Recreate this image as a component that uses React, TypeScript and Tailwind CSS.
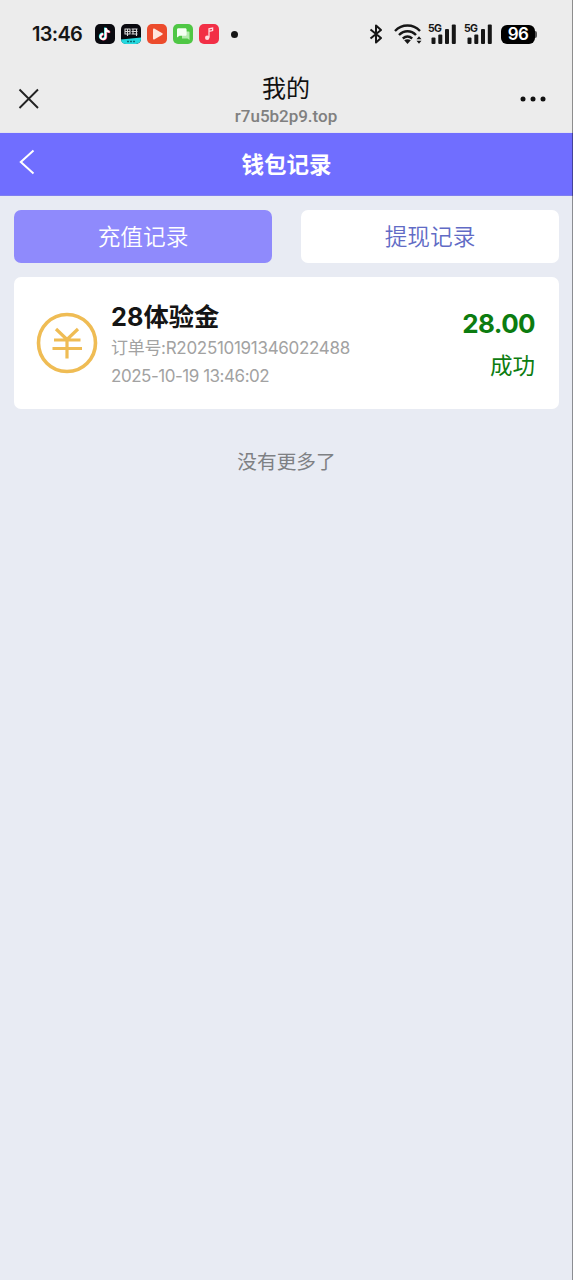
import type { ReactNode } from "react";

const tabs = [
  { name: "充值记录", active: true },
  { name: "提现记录", active: false },
];

const records = [
  {
    title: "28体验金",
    orderNo: "R202510191346022488",
    time: "2025-10-19 13:46:02",
    amount: "28.00",
    status: "成功",
  },
];

function AppBadge({ children }: { children: ReactNode }) {
  return (
    <svg width="20" height="20" viewBox="0 0 20 20" fill="none">
      {children}
    </svg>
  );
}

function Signal() {
  return (
    <div className="relative h-5 w-7">
      <svg className="block" width="28" height="20" viewBox="0 0 28 20" fill="#161616">
        <rect x="3.5" y="13.5" width="4" height="6.5" rx="1" />
        <rect x="10.3" y="10.5" width="4" height="9.5" rx="1" />
        <rect x="17" y="5" width="4" height="15" rx="1" />
        <rect x="23.800" y="0.5" width="4" height="19.5" rx="1" />
      </svg>
      <span className="absolute top-0 left-0 text-[10.500px] leading-[10px] font-bold tracking-[-0.6px]">
        5G
      </span>
    </div>
  );
}

function StatusBar() {
  return (
    <div className="flex h-[68px] items-center pl-8 pr-[36px] text-[#161616]">
      <span className="w-[63px] text-[20px] font-semibold tracking-[-0.7px]">13:46</span>

      <div className="flex items-center gap-[6px]">
        <AppBadge>
          <rect width="20" height="20" rx="5" fill="#09090f" />
          <path d="M10.6 4v8.6a2.6 2.6 0 1 1-2.4-2.6M10.6 4c.3 2.2 1.8 3.6 4 3.8" stroke="#2be8e6" strokeWidth="2" transform="translate(-.6 -.4)" />
          <path d="M10.6 4v8.6a2.6 2.6 0 1 1-2.4-2.6M10.6 4c.3 2.2 1.8 3.6 4 3.8" stroke="#f9406c" strokeWidth="2" transform="translate(.6 .4)" />
          <path d="M10.6 4v8.6a2.6 2.6 0 1 1-2.4-2.6M10.6 4c.3 2.2 1.8 3.6 4 3.8" stroke="#fff" strokeWidth="2" />
        </AppBadge>
        <AppBadge>
          <rect width="20" height="20" rx="5" fill="#09090f" />
          <path d="M0 15.500 20 13.500v1.500a5 5 0 0 1-5 5H5a5 5 0 0 1-5-4.500z" fill="#24d8de" />
          <path d="M3.500 5h6M3.500 7.500h6M3.500 10h6M4 5v5M6.500 4.500V12M9 5v5M10.500 5h6M10.500 7.500h6M10.500 10h6M12 4.500v6M15.500 4.500V12" stroke="#d8d8d8" strokeWidth="1.100" />
          <path d="M6 17.500h2M9 17.500h2M12 17.500h2" stroke="#0a6d77" strokeWidth="1.500" />
        </AppBadge>
        <AppBadge>
          <rect width="20" height="20" rx="5" fill="#ec4b2c" />
          <path d="M6 5.200v9.600c0 .7.6 1 1.200.7l8.100-4.800c.6-.4.6-1 0-1.400L7.200 4.500c-.6-.3-1.200 0-1.200.7z" fill="#ffe4dc" />
        </AppBadge>
        <AppBadge>
          <rect width="20" height="20" rx="5" fill="#4fc745" />
          <path d="M9 7.500h6.500c.8 0 1 .4 1 1V16l-2-1.500H9z" fill="#b5ebae" />
          <path d="M5.500 4.300h6.600c1 0 1.500.5 1.500 1.500v4.400c0 1-.5 1.500-1.500 1.500H6.500L4 13.500V5.800c0-1 .5-1.500 1.500-1.500z" fill="#f4fff2" />
        </AppBadge>
        <AppBadge>
          <rect width="20" height="20" rx="5" fill="#f22f46" />
          <path d="M10 13.500V4.800l3.600-.8v2.600L10 7.400" stroke="#ffdce0" strokeWidth="1.300" />
          <circle cx="8.200" cy="13.700" r="2.200" fill="#ffdce0" />
        </AppBadge>
      </div>

      <span className="ml-3 size-[7px] rounded-full bg-[#161616]" />

      <div className="ml-auto flex items-center">
        <svg width="14" height="20" viewBox="0 0 14 20" fill="none" stroke="#161616" strokeWidth="2">
          <path d="M1.500 5.500 12 14l-5 4.500v-17L12 6 1.500 14.500" strokeLinejoin="round" />
        </svg>
        <svg className="ml-[11px]" width="28" height="20" viewBox="0 0 28 20" fill="none">
          <g stroke="#161616" strokeWidth="2.400">
            <path d="M1 7C8 -.3 19-.3 26 7" />
            <path d="M5 11c5-5 12-5 17 0" />
            <path d="M8.800 14.500c3-2.600 6.400-2.600 9.400 0" />
          </g>
          <path d="M10.200 16.300c2-1.500 4.600-1.500 6.600 0L13.500 20z" fill="#161616" />
          <path d="m22.500 15.300 2.500-3 2.500 3zM22.500 16.800l2.500 3 2.500-3z" fill="#161616" />
        </svg>
        <div className="ml-[6px] flex gap-2">
          <Signal />
          <Signal />
        </div>
        <div className="ml-[9px] mt-px flex items-center">
          <span className="flex h-[19px] w-[34px] items-center justify-center rounded-[6px] bg-black text-[17px] leading-none font-semibold tracking-[-0.5px] text-white">
            96
          </span>
          <span className="h-[7px] w-[2px] rounded-r bg-[#555]" />
        </div>
      </div>
    </div>
  );
}

function BrowserBar() {
  return (
    <div className="flex h-[65px] items-start justify-between border-b border-[#e4e4f0] pl-[18px] pr-[27px]">
      <svg className="mt-5" width="22" height="22" viewBox="0 0 22 22" stroke="#222" strokeWidth="1.900">
        <path d="m1.500 1.500 18.500 18.500M20 1.500 1.500 20" />
      </svg>

      <div className="ml-3 flex flex-col items-center pt-[6px]">
        <h1 className="text-[24px] leading-[30px] text-[#111]">我的</h1>
        <p className="mt-px font-[Roboto,sans-serif] text-[17px] leading-[22px] font-medium tracking-[-0.02px] text-[#808080]">
          r7u5b2p9.top
        </p>
      </div>

      <svg className="mt-[28px]" width="26" height="6" viewBox="0 0 26 6" fill="#111">
        <circle cx="3" cy="3" r="2.500" />
        <circle cx="13" cy="3" r="2.500" />
        <circle cx="23" cy="3" r="2.500" />
      </svg>
    </div>
  );
}

function CoinIcon() {
  return (
    <svg className="-mt-px" width="62" height="62" viewBox="0 0 62 62" fill="none" stroke="#efbc54">
      <circle cx="31" cy="31" r="28.500" strokeWidth="3.600" />
      <path d="m20 17 11 10.500L42 17M18 28h26.500M16.500 36.500h29.500M31 27.500V46.500" strokeWidth="3.200" />
    </svg>
  );
}

export default function App() {
  return (
    <main className="relative h-[1280px] w-full overflow-hidden bg-[#e8ebf3] font-[Inter,'Noto_Sans_CJK_SC',sans-serif]">

      <header className="bg-[#ececec]">
        <StatusBar />
        <BrowserBar />
      </header>

      {/* Page title */}
      <div className="grid h-[63px] grid-cols-[60px_1fr_60px] items-center border-b border-[#7f7ff0] bg-[#706eff] text-white">
        <svg className="-mt-[5px] ml-[19px]" width="16" height="26" viewBox="0 0 16 26" fill="none" stroke="white" strokeWidth="2">
          <path d="M14.500 1.500 1.800 13 14.500 24.500" />
        </svg>
        <h2 className="pt-px text-center text-[22.500px] leading-8 font-bold">钱包记录</h2>
      </div>

      <div className="px-[14px] pt-[14px]">

        {/* Tabs */}
        <div className="grid grid-cols-2 gap-[29px]">
          {tabs.map((tab) => (
            <button
              key={tab.name}
              className={`h-[53px] rounded-[7px] pt-[2px] text-[22.700px] font-[350] ${
                tab.active ? "bg-[#8f8afc] text-white" : "bg-white text-[#616bc5]"
              }`}
            >
              {tab.name}
            </button>
          ))}
        </div>

        {/* Records */}
        {records.map((record) => (
          <div
            key={record.orderNo}
            className="mt-[14px] flex h-[132px] items-center rounded-[7px] bg-white pl-[22px] pr-6"
          >
            <CoinIcon />
            <div className="ml-[13px] flex-1 pt-[3px]">
              <h3 className="text-[25.300px] leading-[34px] font-bold text-[#151515]">{record.title}</h3>
              <p className="text-[17px] leading-7 tracking-[-0.3px] text-[#a2a2a2]">
                订单号:{record.orderNo}
              </p>
              <p className="text-[17px] leading-7 tracking-[-0.47px] text-[#a2a2a2]">
                {record.time}
              </p>
            </div>
            <div className="pt-[3px] text-right text-[#0c7c10]">
              <p className="text-[26px] leading-[42px] font-bold tracking-[-0.6px]">{record.amount}</p>
              <p className="text-[22.500px] leading-[42px]">{record.status}</p>
            </div>
          </div>
        ))}

        <p className="mt-[39px] text-center text-[19.700px] leading-7 text-[#7e8083]">没有更多了</p>
      </div>

      <div className="absolute inset-y-0 right-0 w-px bg-black/40" />
    </main>
  );
}
